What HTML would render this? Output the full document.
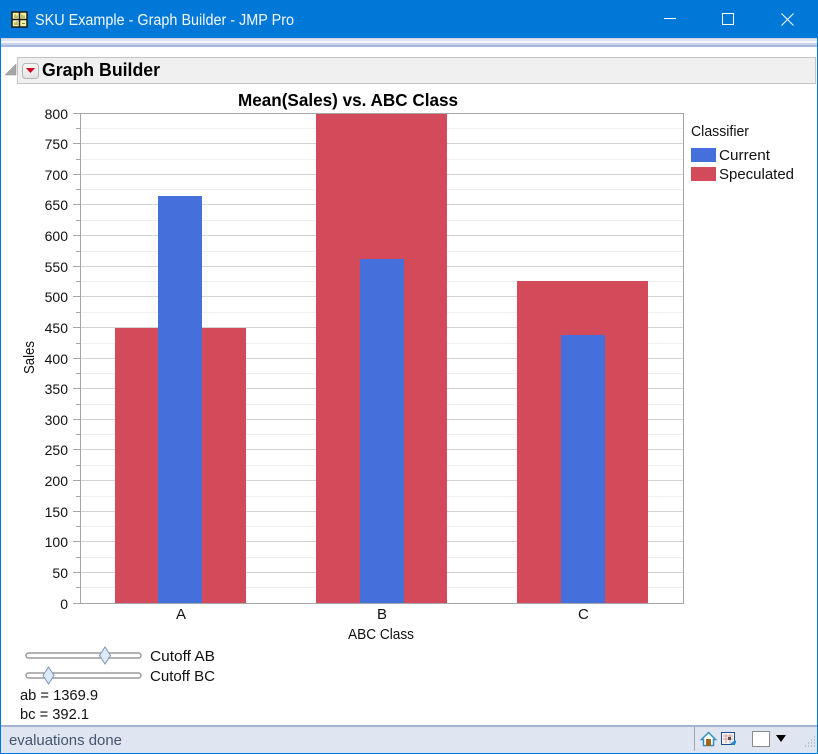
<!DOCTYPE html>
<html><head><meta charset="utf-8"><title>SKU Example - Graph Builder - JMP Pro</title>
<style>
html,body{margin:0;padding:0;width:818px;height:754px;overflow:hidden;background:#fff}
svg{display:block}
text{font-family:"Liberation Sans",sans-serif;font-size:15px;fill:#111}
.y{text-anchor:end;font-size:14px}
</style></head><body>
<svg width="818" height="754" viewBox="0 0 818 754" xmlns="http://www.w3.org/2000/svg">
<defs>
<linearGradient id="btn" x1="0" y1="0" x2="0" y2="1"><stop offset="0" stop-color="#fafafa"/><stop offset="1" stop-color="#e2e2e2"/></linearGradient>
</defs>
<rect width="818" height="754" fill="#0078d7"/>
<rect x="1" y="38" width="816" height="715" fill="#fff"/>
<rect x="1" y="38" width="816" height="1" fill="#c9d5e7"/>
<rect x="1" y="39" width="816" height="2" fill="#dde4ef"/>
<rect x="1" y="41" width="816" height="2" fill="#f4f6fa"/>
<rect x="1" y="43" width="816" height="2" fill="#c8d5e9"/>
<rect x="1" y="45" width="816" height="2" fill="#a3b8da"/>
<!-- title icon -->
<rect x="12" y="12" width="15" height="15" fill="#f6f3a6" stroke="#1a1a1a" stroke-width="1.500"/>
<path d="M19.500 12v15M12 19.500h15" stroke="#1a1a1a" stroke-width="1.500" fill="none"/>
<path d="M15 14.500v3.500M17 15.500v2.500M22 14.500v3.500M24 15.500v2.500M15 22.500v2.500M17 21.500v3.500M22 23.500h3" stroke="#7d8a2c" fill="none"/>
<text x="35" y="25" textLength="259" lengthAdjust="spacingAndGlyphs" style="font-size:15.500px;fill:#f4f9fd">SKU Example - Graph Builder - JMP Pro</text>
<!-- window buttons -->
<path d="M664 18.500h12" stroke="#fff" fill="none"/>
<rect x="722.500" y="13.500" width="11" height="11" stroke="#fff" fill="none"/>
<path d="M781.500 13.500l12 12M793.500 13.500l-12 12" stroke="#fff" fill="none"/>
<!-- outline header -->
<path d="M5 75h11V64z" fill="#a6a6a6" stroke="#8a8a8a" stroke-width=".5"/>
<rect x="17.500" y="57.500" width="798" height="26" fill="#f0f0f0" stroke="#c4c4c4"/>
<rect x="22.500" y="63.500" width="16" height="15" rx="3" fill="url(#btn)" stroke="#b5b5b5"/>
<path d="M26 68h9l-4.500 5z" fill="#d5001c"/>
<text x="42" y="76" textLength="118" lengthAdjust="spacingAndGlyphs" style="font-size:18px;font-weight:bold;fill:#000">Graph Builder</text>
<text x="238" y="106" textLength="220" lengthAdjust="spacingAndGlyphs" style="font-size:17.500px;font-weight:bold;fill:#000">Mean(Sales) vs. ABC Class</text>
<!-- minor grid -->
<path d="M81 128.500H683M81 159.500H683M81 189.500H683M81 220.500H683M81 251.500H683M81 281.500H683M81 312.500H683M81 343.500H683M81 373.500H683M81 404.500H683M81 434.500H683M81 465.500H683M81 496.500H683M81 526.500H683M81 557.500H683M81 587.500H683" stroke="#efefef" fill="none"/>
<!-- major grid -->
<path d="M81 143.500H683M81 174.500H683M81 204.500H683M81 235.500H683M81 266.500H683M81 296.500H683M81 327.500H683M81 358.500H683M81 388.500H683M81 419.500H683M81 449.500H683M81 480.500H683M81 511.500H683M81 541.500H683M81 572.500H683" stroke="#d3d3d3" fill="none"/>
<!-- bars -->
<rect x="115" y="328" width="131" height="275" fill="#d34a5a"/>
<rect x="316" y="114" width="131" height="489" fill="#d34a5a"/>
<rect x="517" y="281" width="131" height="322" fill="#d34a5a"/>
<rect x="158" y="196" width="44" height="407" fill="#4570dc"/>
<rect x="360" y="259" width="44" height="344" fill="#4570dc"/>
<rect x="561" y="335" width="44" height="268" fill="#4570dc"/>
<!-- axes -->
<rect x="80.500" y="113.500" width="603" height="490" fill="none" stroke="#a6a6a6"/>
<path d="M73 113.500h8M73 143.500h8M73 174.500h8M73 204.500h8M73 235.500h8M73 266.500h8M73 296.500h8M73 327.500h8M73 358.500h8M73 388.500h8M73 419.500h8M73 449.500h8M73 480.500h8M73 511.500h8M73 541.500h8M73 572.500h8M73 603.500h8" stroke="#a6a6a6" fill="none"/>
<path d="M76 128.500h5M76 159.500h5M76 189.500h5M76 220.500h5M76 251.500h5M76 281.500h5M76 312.500h5M76 343.500h5M76 373.500h5M76 404.500h5M76 434.500h5M76 465.500h5M76 496.500h5M76 526.500h5M76 557.500h5M76 587.500h5" stroke="#a6a6a6" fill="none"/>
<!-- y labels -->
<text class="y" x="68" y="119">800</text>
<text class="y" x="68" y="149">750</text>
<text class="y" x="68" y="180">700</text>
<text class="y" x="68" y="210">650</text>
<text class="y" x="68" y="241">600</text>
<text class="y" x="68" y="272">550</text>
<text class="y" x="68" y="302">500</text>
<text class="y" x="68" y="333">450</text>
<text class="y" x="68" y="364">400</text>
<text class="y" x="68" y="394">350</text>
<text class="y" x="68" y="425">300</text>
<text class="y" x="68" y="455">250</text>
<text class="y" x="68" y="486">200</text>
<text class="y" x="68" y="517">150</text>
<text class="y" x="68" y="547">100</text>
<text class="y" x="68" y="578">50</text>
<text class="y" x="68" y="609">0</text>
<text transform="translate(34,374) rotate(-90)" textLength="33" lengthAdjust="spacingAndGlyphs">Sales</text>
<text x="176" y="619">A</text>
<text x="377" y="619">B</text>
<text x="578" y="619">C</text>
<text x="348" y="639" textLength="66" lengthAdjust="spacingAndGlyphs">ABC Class</text>
<!-- legend -->
<text x="691" y="136" textLength="58" lengthAdjust="spacingAndGlyphs">Classifier</text>
<rect x="691" y="148" width="25" height="14" fill="#4570dc"/>
<rect x="691" y="167" width="25" height="14" fill="#d34a5a"/>
<text x="719" y="160" textLength="51" lengthAdjust="spacingAndGlyphs">Current</text>
<text x="719" y="179" textLength="75" lengthAdjust="spacingAndGlyphs">Speculated</text>
<!-- sliders -->
<rect x="26" y="653" width="115" height="5" rx="2.500" fill="#fff" stroke="#9a9a9a" stroke-width="1.500"/>
<rect x="26" y="673" width="115" height="5" rx="2.500" fill="#fff" stroke="#9a9a9a" stroke-width="1.500"/>
<path d="M105 647l5.500 8.500-5.500 8.500-5.500-8.500z" fill="#deeafa" stroke="#7b94b8"/>
<path d="M48.500 667l5.500 8.500-5.500 8.500-5.500-8.500z" fill="#deeafa" stroke="#7b94b8"/>
<text x="150" y="661" textLength="65" lengthAdjust="spacingAndGlyphs">Cutoff AB</text>
<text x="150" y="681" textLength="65" lengthAdjust="spacingAndGlyphs">Cutoff BC</text>
<text x="20" y="700" textLength="78" lengthAdjust="spacingAndGlyphs">ab = 1369.9</text>
<text x="20" y="719" textLength="69" lengthAdjust="spacingAndGlyphs">bc = 392.1</text>
<!-- status bar -->
<rect x="1" y="725" width="816" height="2" fill="#a3b2cf"/>
<rect x="1" y="727" width="816" height="26" fill="#e0e6f1"/>
<text x="9" y="745" textLength="113" lengthAdjust="spacingAndGlyphs" style="fill:#44546f">evaluations done</text>
<path d="M694.500 727v24" stroke="#a0a8b5" fill="none"/>
<path d="M701.500 739.500l7-7 7 7h-2v6h-10v-6z" fill="#fff" stroke="#2f8fc4" stroke-width="1.500"/>
<rect x="706" y="739" width="5" height="7" fill="#a0661a"/>
<rect x="721.500" y="732.500" width="13" height="12" fill="#f6f2f2" stroke="#1f4e8c"/>
<path d="M723 736h10M723 739h10M726 734v9M730 734v9" stroke="#d9a0a0" fill="none"/>
<rect x="728" y="737" width="3" height="3" fill="#555"/>
<path d="M730 744l5-4 1 1v2l-2 2z" fill="#2a8fd0"/>
<rect x="752.500" y="731.500" width="17" height="15" fill="#fff" stroke="#8a8a8a"/>
<path d="M776 735h10l-5 7z" fill="#000"/>
<path d="M814 737h1M811 740h1M814 740h1M808 743h1M811 743h1M814 743h1M805 746h1M808 746h1M811 746h1M814 746h1" stroke="#b9c0cc" stroke-width="2" fill="none"/>
</svg>
</body></html>
